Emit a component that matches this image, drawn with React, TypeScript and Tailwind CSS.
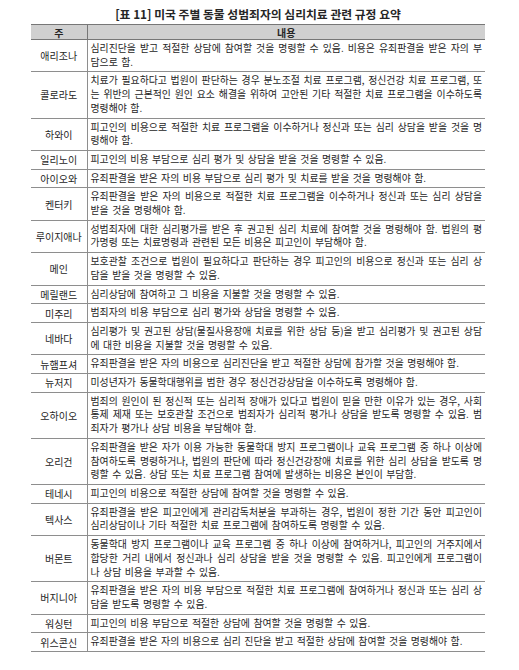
import React from 'react';

type Row = { state: string; lines: string[] };

const rows: Row[] = [
  {
    state: '애리조나',
    lines: [
      '심리진단을 받고 적절한 상담에 참여할 것을 명령할 수 있음. 비용은 유죄판결을 받은 자의 부',
      '담으로 함.',
    ],
  },
  {
    state: '콜로라도',
    lines: [
      '치료가 필요하다고 법원이 판단하는 경우 분노조절 치료 프로그램, 정신건강 치료 프로그램, 또',
      '는 위반의 근본적인 원인 요소 해결을 위하여 고안된 기타 적절한 치료 프로그램을 이수하도록',
      '명령해야 함.',
    ],
  },
  {
    state: '하와이',
    lines: [
      '피고인의 비용으로 적절한 치료 프로그램을 이수하거나 정신과 또는 심리 상담을 받을 것을 명',
      '령해야 함.',
    ],
  },
  { state: '일리노이', lines: ['피고인의 비용 부담으로 심리 평가 및 상담을 받을 것을 명령할 수 있음.'] },
  { state: '아이오와', lines: ['유죄판결을 받은 자의 비용 부담으로 심리 평가 및 치료를 받을 것을 명령해야 함.'] },
  {
    state: '켄터키',
    lines: [
      '유죄판결을 받은 자의 비용으로 적절한 치료 프로그램을 이수하거나 정신과 또는 심리 상담을',
      '받을 것을 명령해야 함.',
    ],
  },
  {
    state: '루이지애나',
    lines: [
      '성범죄자에 대한 심리평가를 받은 후 권고된 심리 치료에 참여할 것을 명령해야 함. 법원의 평',
      '가명령 또는 치료명령과 관련된 모든 비용은 피고인이 부담해야 함.',
    ],
  },
  {
    state: '메인',
    lines: [
      '보호관찰 조건으로 법원이 필요하다고 판단하는 경우 피고인의 비용으로 정신과 또는 심리 상',
      '담을 받을 것을 명령할 수 있음.',
    ],
  },
  { state: '메릴랜드', lines: ['심리상담에 참여하고 그 비용을 지불할 것을 명령할 수 있음.'] },
  { state: '미주리', lines: ['범죄자의 비용 부담으로 심리 평가와 상담을 명령할 수 있음.'] },
  {
    state: '네바다',
    lines: [
      '심리평가 및 권고된 상담(물질사용장애 치료를 위한 상담 등)을 받고 심리평가 및 권고된 상담',
      '에 대한 비용을 지불할 것을 명령할 수 있음.',
    ],
  },
  { state: '뉴햄프셔', lines: ['유죄판결을 받은 자의 비용으로 심리진단을 받고 적절한 상담에 참가할 것을 명령해야 함.'] },
  { state: '뉴저지', lines: ['미성년자가 동물학대행위를 범한 경우 정신건강상담을 이수하도록 명령해야 함.'] },
  {
    state: '오하이오',
    lines: [
      '범죄의 원인이 된 정신적 또는 심리적 장애가 있다고 법원이 믿을 만한 이유가 있는 경우, 사회',
      '통제 제재 또는 보호관찰 조건으로 범죄자가 심리적 평가나 상담을 받도록 명령할 수 있음. 범',
      '죄자가 평가나 상담 비용을 부담해야 함.',
    ],
  },
  {
    state: '오리건',
    lines: [
      '유죄판결을 받은 자가 이용 가능한 동물학대 방지 프로그램이나 교육 프로그램 중 하나 이상에',
      '참여하도록 명령하거나, 법원의 판단에 따라 정신건강장애 치료를 위한 심리 상담을 받도록 명',
      '령할 수 있음. 상담 또는 치료 프로그램 참여에 발생하는 비용은 본인이 부담함.',
    ],
  },
  { state: '테네시', lines: ['피고인의 비용으로 적절한 상담에 참여할 것을 명령할 수 있음.'] },
  {
    state: '텍사스',
    lines: [
      '유죄판결을 받은 피고인에게 관리감독처분을 부과하는 경우, 법원이 정한 기간 동안 피고인이',
      '심리상담이나 기타 적절한 치료 프로그램에 참여하도록 명령할 수 있음.',
    ],
  },
  {
    state: '버몬트',
    lines: [
      '동물학대 방지 프로그램이나 교육 프로그램 중 하나 이상에 참여하거나, 피고인의 거주지에서',
      '합당한 거리 내에서 정신과나 심리 상담을 받을 것을 명령할 수 있음. 피고인에게 프로그램이',
      '나 상담 비용을 부과할 수 있음.',
    ],
  },
  {
    state: '버지니아',
    lines: [
      '유죄판결을 받은 자의 비용 부담으로 적절한 치료 프로그램에 참여하거나 정신과 또는 심리 상',
      '담을 받도록 명령할 수 있음.',
    ],
  },
  { state: '워싱턴', lines: ['피고인의 비용 부담으로 적절한 상담에 참여할 것을 명령할 수 있음.'] },
  { state: '위스콘신', lines: ['유죄판결을 받은 자의 비용으로 심리 진단을 받고 적절한 상담에 참여할 것을 명령해야 함.'] },
];

// each printed line is kept as its own block so the breaks match the scan
const Line = ({ text, last }: { text: string; last: boolean }) => (
  <div
    className={
      last
        ? 'whitespace-nowrap'
        : 'whitespace-nowrap text-justify [text-align-last:justify]'
    }
  >
    {text}
  </div>
);

export default function App() {
  return (
    <div className="min-h-screen bg-white pt-[6px] font-['Noto_Sans_CJK_KR',sans-serif] text-[#262626]">
      <div className="ml-[31px] w-[454px]">
        <h1 className="text-center text-[11.8px] font-bold leading-[16px]">
          [표 11] 미국 주별 동물 성범죄자의 심리치료 관련 규정 요약
        </h1>

        <table className="mt-[2px] w-full table-fixed border-collapse">
          <colgroup>
            <col className="w-[56px]" />
            <col />
          </colgroup>
          <thead>
            <tr className="bg-[#d0d0d0]">
              <th className="h-[15px] border-t border-b border-r border-[#777] p-0 text-center text-[10px] font-bold leading-[13px]">
                주
              </th>
              <th className="h-[15px] border-t border-b border-[#777] p-0 text-center text-[10px] font-bold leading-[13px]">
                내용
              </th>
            </tr>
          </thead>
          <tbody>
            {rows.map((r) => (
              <tr key={r.state}>
                <td className="border-b border-r border-[#8e8e8e] p-0 text-center align-middle text-[10px] leading-[13px]">
                  {r.state}
                </td>
                <td className="border-b border-[#8e8e8e] py-[2px] pr-[3px] pl-[3px] text-[9.9px] leading-[13.7px] [word-spacing:1.3px]">
                  {r.lines.map((l, i) => (
                    <Line key={i} text={l} last={i === r.lines.length - 1} />
                  ))}
                </td>
              </tr>
            ))}
          </tbody>
        </table>
      </div>
    </div>
  );
}
